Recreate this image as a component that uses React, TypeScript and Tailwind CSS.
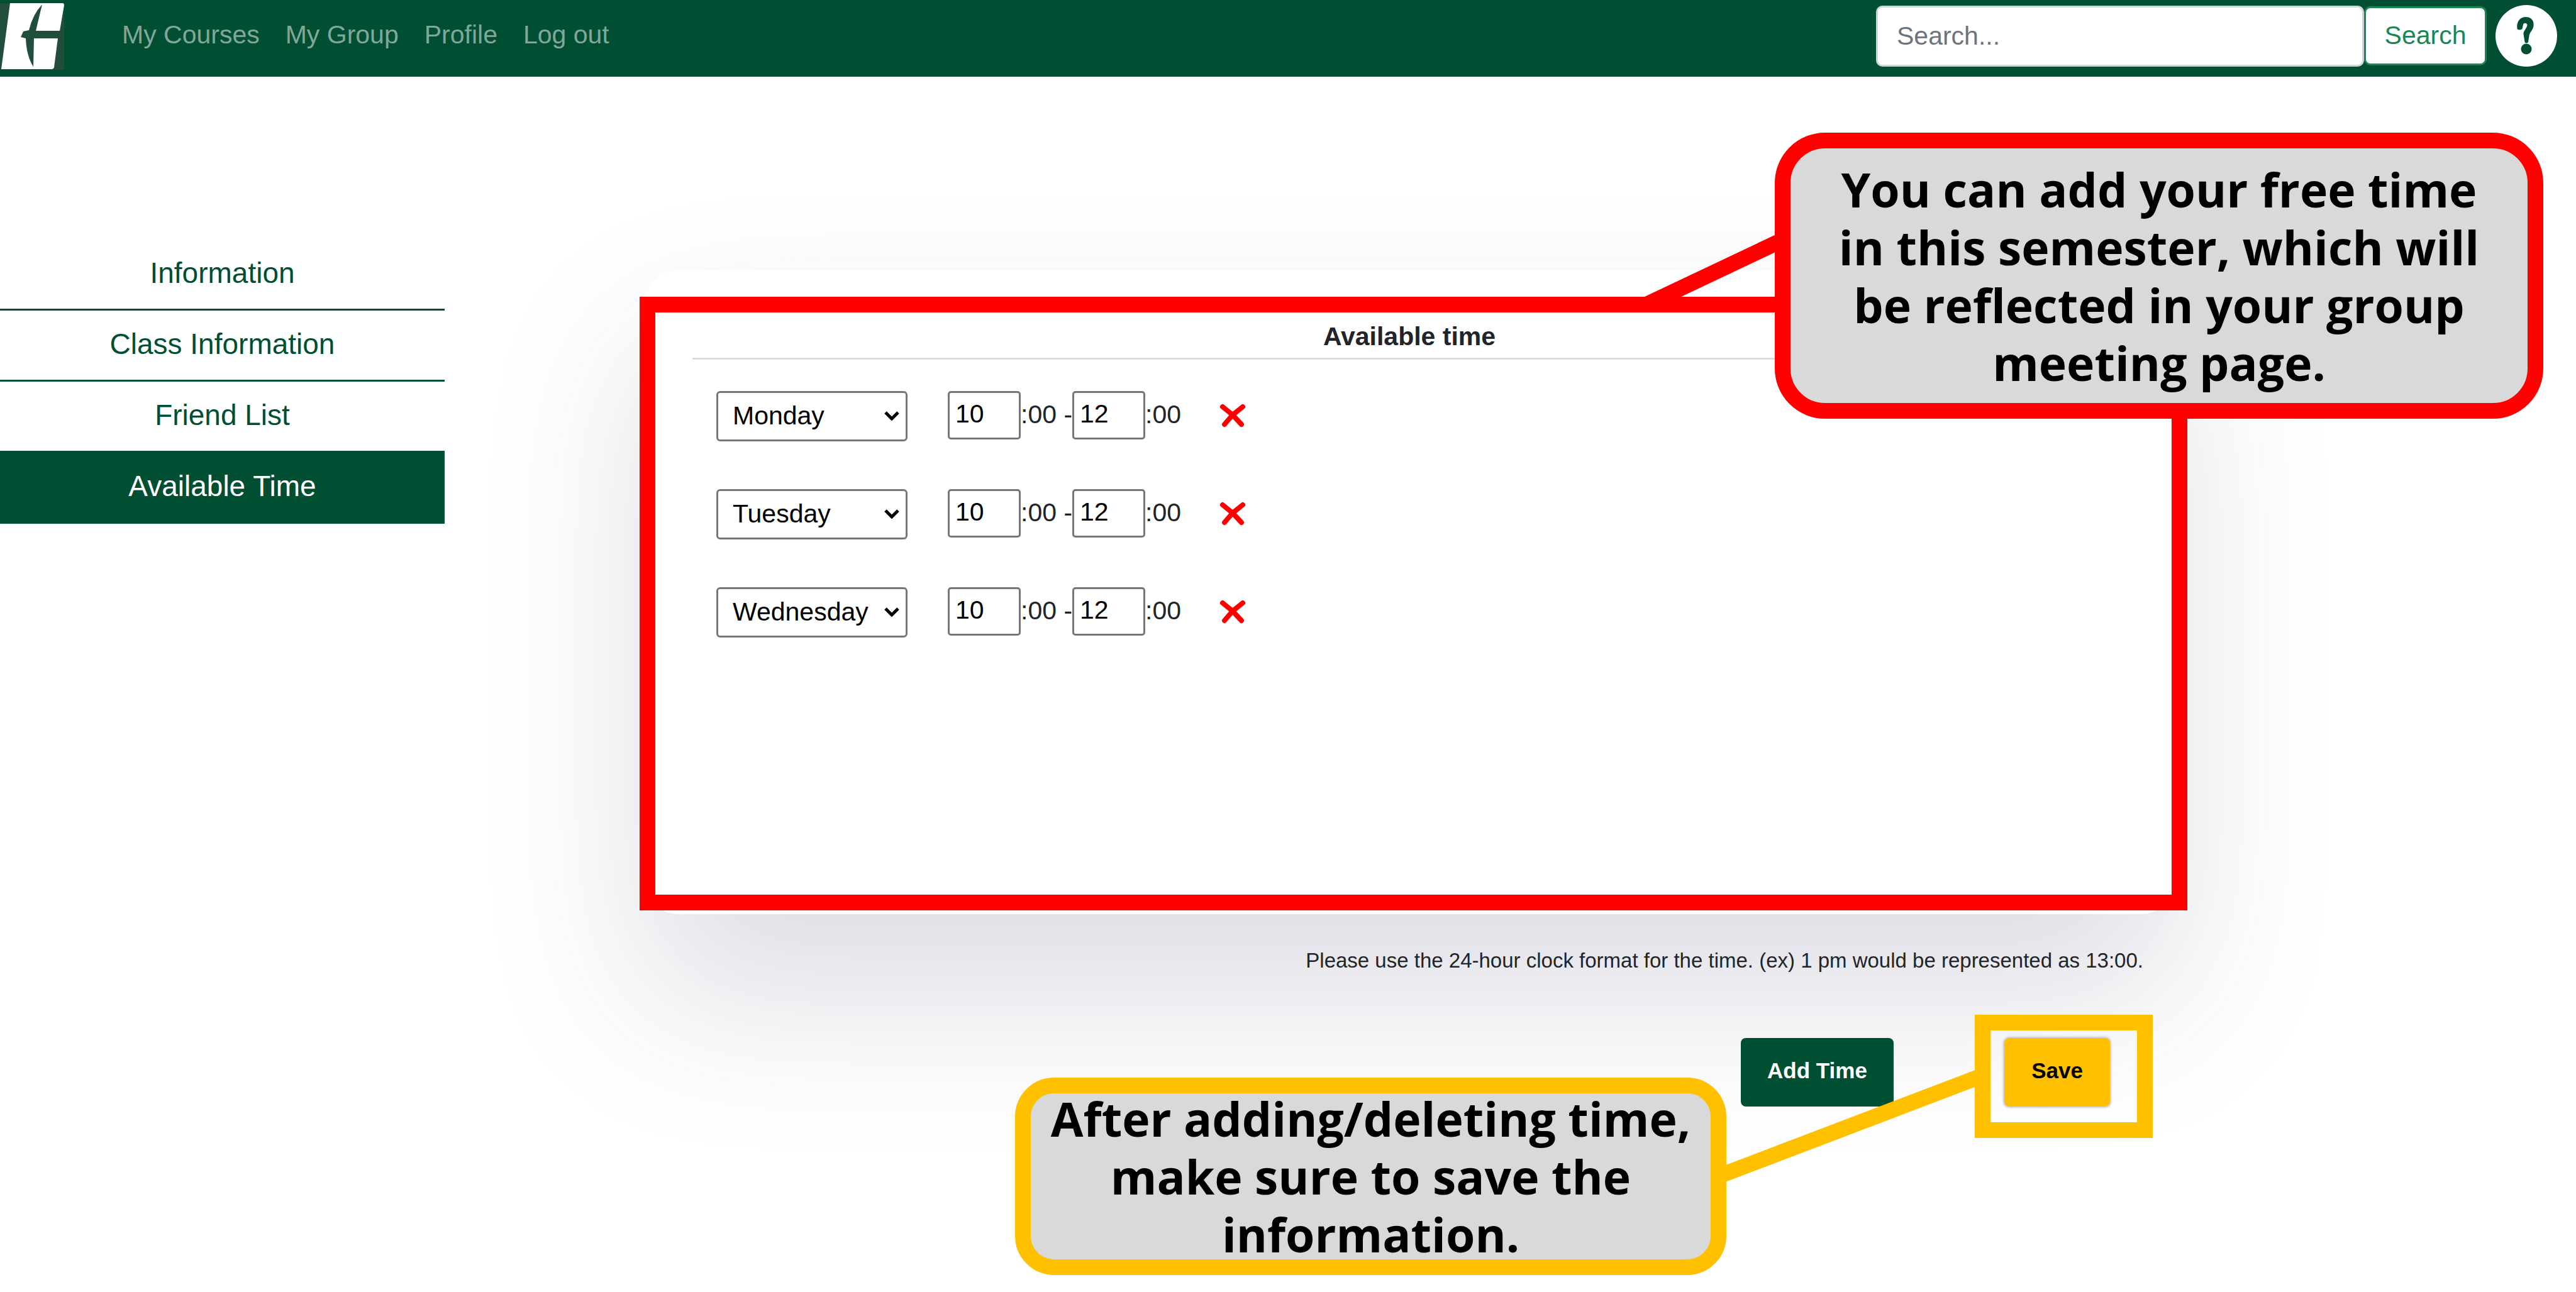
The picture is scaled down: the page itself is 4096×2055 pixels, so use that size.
import React from "react";

const NAV_LINKS = ["My Courses", "My Group", "Profile", "Log out"];

const SIDE_LINKS = [
  { label: "Information", active: false },
  { label: "Class Information", active: false },
  { label: "Friend List", active: false },
  { label: "Available Time", active: true },
];

const DAYS = ["Monday", "Tuesday", "Wednesday", "Thursday", "Friday", "Saturday", "Sunday"];

const SLOTS = [
  { day: "Monday", from: "10", to: "12" },
  { day: "Tuesday", from: "10", to: "12" },
  { day: "Wednesday", from: "10", to: "12" },
];

function Logo() {
  return (
    <svg viewBox="0 0 102 106" className="h-[106px] w-[102px]" role="img" aria-label="Home">
      <rect width="102" height="106" fill="#214d3b" />
      <path
        d="M16 0H99Q102 0 102 3L95 44H57L67 2Q52 18 46 43L37 45L33 54L41 56Q42 84 53 101L54 56H92L86 102Q85 105 82 105H2Z"
        fill="#fff"
      />
    </svg>
  );
}

function HelpIcon() {
  return (
    <svg viewBox="0 0 98 98" className="size-[98px]" aria-hidden="true">
      <circle cx="49" cy="49" r="49" fill="#fff" />
      <path
        d="M34.500 38C33 25 40 19 48 19C57 19 61.500 25 60.500 33C60 40 54 43 53.500 49L52 59Q49 62.500 46.500 59L44.500 46C44 41 50 37 50.500 32C50.500 28 45 27.500 44 31L42.500 38Q38 41 34.500 38Z"
        fill="#004f33"
      />
      <circle cx="49" cy="70" r="8.500" fill="#004f33" />
    </svg>
  );
}

function Header() {
  return (
    <header className="flex h-[122px] items-start bg-[#004f33]">
      <a href="#home" className="mt-[5px]">
        <Logo />
      </a>
      <nav className="ml-[92px] flex h-[109px] items-center gap-[41px] text-[41px] leading-[60px] text-[#80a799]">
        {NAV_LINKS.map((label) => (
          <a key={label} href="#nav">
            {label}
          </a>
        ))}
      </nav>
      <form className="mt-2 mr-[30px] ml-auto flex items-center" onSubmit={(e) => e.preventDefault()}>
        <input
          type="search"
          aria-label="Search"
          placeholder="Search..."
          className="h-[97px] w-[776px] rounded-[10px] border-[3px] border-[#ced4da] bg-white px-[30px] text-[41px] text-[#212529] placeholder:text-[#6c757d]"
        />
        <button
          type="submit"
          className="h-[94px] w-[195px] rounded-[10px] border-[3px] border-[#198754] bg-white text-[41px] text-[#198754]"
        >
          Search
        </button>
        <button type="button" aria-label="Help" className="ml-[14px]">
          <HelpIcon />
        </button>
      </form>
    </header>
  );
}

function Sidebar() {
  return (
    <nav className="mt-[259px] w-[707px] shrink-0 text-center text-[46px] leading-[68px]">
      {SIDE_LINKS.map(({ label, active }) => (
        <a
          key={label}
          href="#section"
          className={
            active
              ? "block border-b-[3px] border-[#004f33] bg-[#004f33] pt-[19px] pb-[23px] text-white"
              : "block border-b-[3px] border-[#004f33] pt-[19px] pb-[23px] text-[#004f33]"
          }
        >
          {label}
        </a>
      ))}
    </nav>
  );
}

function TimeInput({ label, value }: { label: string; value: string }) {
  return (
    <input
      type="text"
      aria-label={label}
      defaultValue={value}
      className="h-[77px] w-[116px] rounded-[5px] border-[3px] border-[#767676] bg-white px-[9px] pb-1 text-[41px] text-black"
    />
  );
}

function SlotRow({ day, from, to }: { day: string; from: string; to: string }) {
  return (
    <li className="flex h-20 items-start">
      <span className="relative">
        <select
          aria-label="Day"
          defaultValue={day}
          className="block h-20 w-[304px] appearance-none rounded-[6px] border-[3px] border-[#767676] bg-white px-[23px] text-[41px] text-black"
        >
          {DAYS.map((d) => (
            <option key={d}>{d}</option>
          ))}
        </select>
        <svg viewBox="0 0 24 15" className="pointer-events-none absolute top-8 right-[13px] h-[15px] w-6" aria-hidden="true">
          <path d="M2 2L12 12L22 2" fill="none" stroke="#000" strokeWidth="5" />
        </svg>
      </span>
      <span className="ml-16 flex items-center text-[41px] leading-[72px] text-[#212529]">
        <TimeInput label="Start hour" value={from} />
        <span className="pb-1 whitespace-pre">:00 -</span>
        <TimeInput label="End hour" value={to} />
        <span className="pb-1">:00</span>
      </span>
      <button type="button" aria-label="Delete time" className="mt-5 ml-[61px]">
        <svg viewBox="0 0 42 38" className="h-[38px] w-[42px]" aria-hidden="true">
          <path d="M5 5L21 18L35 33M37 5L21 18L8 33" fill="none" stroke="#ff0000" strokeWidth="8" strokeLinecap="round" />
        </svg>
      </button>
    </li>
  );
}

function AvailabilityCard() {
  return (
    <section className="relative h-[1024px] rounded-[52px] bg-white shadow-[0_128px_255px_0_rgba(50,50,93,0.17)]">
      <div className="px-[75px] pt-[82px]">
        <h2 className="border-b-[3px] border-[#dcdcdc] pb-[11px] text-center text-[41px] leading-[46px] font-bold text-[#212529]">
          Available time
        </h2>
        <ul className="mt-[50px] flex flex-col gap-[76px] pl-[38px]">
          {SLOTS.map((slot) => (
            <SlotRow key={slot.day} {...slot} />
          ))}
        </ul>
      </div>

      <div className="pointer-events-none absolute top-[42px] -right-[22px] bottom-[6px] -left-[9px] border-[25px] border-[#ff0000]" />
      <svg viewBox="0 0 240 120" className="pointer-events-none absolute -top-[60px] right-[622px] h-[120px] w-[240px]" aria-hidden="true">
        <path d="M12 120L240 12" stroke="#ff0000" strokeWidth="25" />
      </svg>
      <p className="absolute -top-[219px] -right-[588px] flex h-[455px] w-[1222px] items-center justify-center rounded-[80px] border-[25px] border-[#ff0000] bg-[#d9d9d9] px-16 text-center font-['Open_Sans',sans-serif] text-[75px] leading-[92px] font-bold text-black">
        You can add your free time in this semester, which will be reflected in your group meeting page.
      </p>
    </section>
  );
}

function Actions() {
  return (
    <div className="relative mt-24 mr-[101px] flex justify-end gap-44">
      <button type="button" className="h-[109px] w-[243px] rounded-lg bg-[#004f33] pb-1 text-[35px] font-bold text-white">
        Add Time
      </button>
      <div className="relative">
        <button type="button" className="h-[109px] w-[168px] rounded-lg bg-[#ffc000] pb-1 text-[35px] font-bold text-black shadow-[0_0_3px_2px_#c8c8d0]">
          Save
        </button>
        <div className="pointer-events-none absolute -top-[37px] -right-[68px] -bottom-[50px] -left-[47px] border-[25px] border-[#ffc000]" />
      </div>
      <svg viewBox="0 0 410 190" className="pointer-events-none absolute top-[45px] right-[208px] h-[190px] w-[410px]" aria-hidden="true">
        <path d="M0 173L410 17" stroke="#ffc000" strokeWidth="25" />
      </svg>
      <p className="absolute top-[63px] right-[610px] flex h-[314px] w-[1131px] items-center justify-center rounded-[62px] border-[25px] border-[#ffc000] bg-[#d9d9d9] px-4 text-center font-['Open_Sans',sans-serif] text-[75px] leading-[92px] font-bold text-black">
        After adding/deleting time, make sure to save the information.
      </p>
    </div>
  );
}

export default function App() {
  return (
    <div className="min-h-screen overflow-hidden bg-white font-['Liberation_Sans',Arial,sans-serif]">
      <Header />
      <div className="flex items-start">
        <Sidebar />
        <main className="mt-[308px] mr-[640px] ml-[319px] flex-1">
          <AvailabilityCard />
          <p className="relative mt-[47px] mr-12 text-right text-[33px] leading-[54px] text-[#212529]">
            Please use the 24-hour clock format for the time. (ex) 1 pm would be represented as 13:00.
          </p>
          <Actions />
        </main>
      </div>
    </div>
  );
}
